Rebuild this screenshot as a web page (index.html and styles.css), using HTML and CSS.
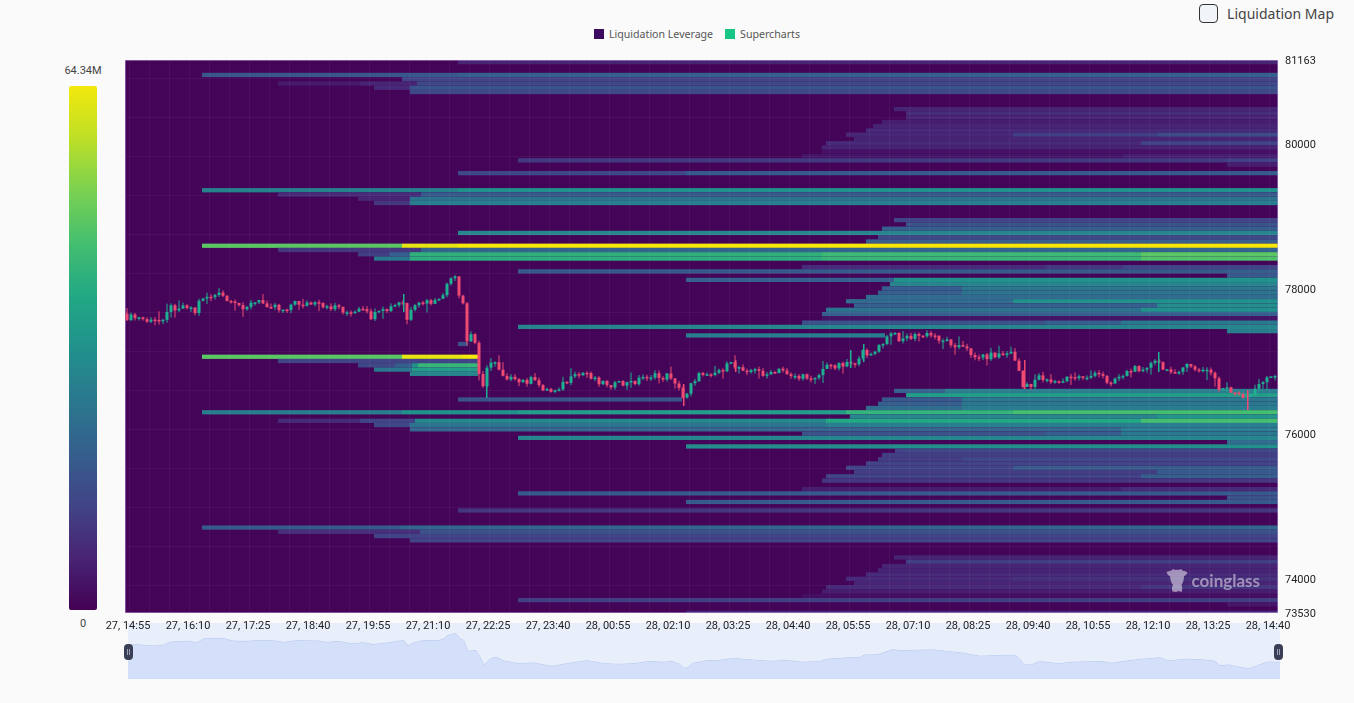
FILE: index.html
```html
<!DOCTYPE html>
<html lang="en">
<head>
  <meta charset="UTF-8">
  <meta name="viewport" content="width=device-width, initial-scale=1.0">
  <title>Liquidation Heatmap</title>
  <link rel="stylesheet" href="styles.css">
</head>
<body>

<div class="topbar">
  <label class="map-toggle">
    <input type="checkbox">
    <span>Liquidation Map</span>
  </label>
</div>

<div class="legend">
  <span class="legend-box leverage"></span>
  <span class="legend-text">Liquidation Leverage</span>
  <span class="legend-box supercharts"></span>
  <span class="legend-text">Supercharts</span>
</div>

<div class="chart-row">
  <div class="scale">
    <div class="scale-label">64.34M</div>
    <div class="scale-bar"></div>
    <div class="scale-label">0</div>
  </div>
  <div class="plot">
    <canvas id="heatmap" width="1153" height="553"></canvas>
    <div class="watermark">
      <svg viewBox="0 0 22 24" width="22" height="24">
        <path d="M.5 4C2 3 3.500 3 5 3C6 1 8 .5 9 2C10 1.500 12 1.500 13 2C14 .5 16 1 17 3C18.500 3 20 3 21.500 5C20 7 19 8 18 8C18 12 17 15 15.500 17C16.500 19 16.500 22 15.500 24L12.500 23L10 24L6.500 23.500C5.500 21 6 19 7 17C5 15 4.500 12 4 8C3 8 1.500 7 .5 4Z"/>
      </svg>
      <span>coinglass</span>
    </div>
  </div>
  <div class="y-axis" id="yAxis"></div>
</div>

<div class="brush">
  <canvas id="brushArea" width="1152" height="56"></canvas>
  <div class="x-axis" id="xAxis"></div>
  <div class="handle handle-left"></div>
  <div class="handle handle-right"></div>
</div>

<script src="chart.js"></script>
</body>
</html>
```

FILE: styles.css
```css
body {
  margin: 0;
  background-color: #fafafa;
  font-family: Roboto, Arial, sans-serif;
  color: #333;
}
.topbar {
  height: 27px;
  display: flex;
  justify-content: flex-end;
  align-items: center;
  padding-right: 20px;
}
.map-toggle {
  display: flex;
  align-items: center;
  gap: 9px;
  font-family: "Noto Sans", Arial, sans-serif;
  font-size: 14px;
  color: #444;
}
.map-toggle input {
  appearance: none;
  margin: 0;
  width: 19px;
  height: 19px;
  box-sizing: border-box;
  background-color: #f1f4f8;
  border: 1px solid #333;
  border-radius: 4px;
}
.legend {
  height: 14px;
  margin: 0 0 19px 40px;
  display: flex;
  justify-content: center;
  align-items: center;
  font-family: "Noto Sans", Arial, sans-serif;
  font-size: 10.6px;
  color: #555;
}
.legend-box {
  width: 10px;
  height: 10px;
  margin-right: 5px;
}
.legend-box.leverage {
  background-color: #3c0a5f;
}
.legend-box.supercharts {
  background-color: #16c784;
}
.legend-text {
  margin-right: 12px;
}
.legend-text:last-child {
  margin-right: 0;
}
.chart-row {
  display: flex;
  height: 553px;
}
.scale {
  width: 125px;
  flex-shrink: 0;
  box-sizing: border-box;
  padding: 4px 28px 0 69px;
  display: flex;
  flex-direction: column;
  align-items: center;
}
.scale-label {
  font-size: 11px;
  line-height: 14px;
  color: #444;
}
.scale-bar {
  width: 28px;
  height: 524px;
  flex-shrink: 0;
  margin: 8px 0 7px 0;
  border-radius: 2px;
  background: linear-gradient(to bottom, #f3e80c 0%, #bddf26 10%, #7ad151 20%, #44bf70 30%, #22a884 40%, #21918c 50%, #2a788e 60%, #355f8d 70%, #414487 80%, #482475 90%, #440154 100%);
}
.plot {
  position: relative;
  width: 1153px;
  height: 553px;
  flex-shrink: 0;
}
#heatmap {
  display: block;
  filter: blur(0.6px);
}
.watermark {
  position: absolute;
  right: 18px;
  bottom: 21px;
  display: flex;
  align-items: center;
  gap: 4px;
  color: rgba(255, 255, 255, 0.48);
  font-family: Lato, Arial, sans-serif;
  font-size: 17px;
  font-weight: 700;
}
.watermark svg {
  fill: rgba(255, 255, 255, 0.5);
}
.y-axis {
  position: relative;
  flex-grow: 1;
}
.y-label {
  position: absolute;
  left: 7px;
  font-size: 11px;
  line-height: 14px;
  margin-top: -6px;
  color: #222;
}
.brush {
  position: relative;
  width: 1152px;
  height: 56px;
  margin: 10px 0 0 128px;
  background-color: #e9eefb;
}
#brushArea {
  display: block;
}
.x-axis {
  position: absolute;
  left: -30px;
  top: -4px;
  display: flex;
}
.x-label {
  width: 60px;
  text-align: center;
  font-size: 11px;
  line-height: 14px;
  color: #222;
  white-space: nowrap;
}
.handle {
  position: absolute;
  top: 21px;
  width: 9px;
  height: 16px;
  border-radius: 4px;
  background-color: #3a3f55;
}
.handle::before {
  content: "";
  position: absolute;
  left: 3px;
  top: 5px;
  width: 1px;
  height: 6px;
  border-left: 1px solid #9aa0b5;
  border-right: 1px solid #9aa0b5;
}
.handle-left {
  left: -4px;
}
.handle-right {
  right: -3px;
}
```

FILE: chart.js
```js
const PLOT_LEFT = 125;
const PLOT_TOP = 60;
const ROW_HEIGHT = 4.27;
const PLOT_RIGHT = 1278;

const viridis = ['#440458', '#482475', '#414487', '#355f8d', '#2a788e', '#21918c', '#22a884', '#44bf70', '#7ad151', '#bddf26', '#f5e80a'];

// row number, then [start x, value] pairs; a value of 0 ends the band
const bands = [
  [0, [458, .1]],
  [3, [202, .27], [458, .3]],
  [4, [402, .2]],
  [5, [278, .07], [360, .1], [417, .22]],
  [6, [374, .12], [410, .26]],
  [7, [410, .22]],
  [11, [894, .1]],
  [12, [906, .13]],
  [13, [906, .1]],
  [14, [882, .08]],
  [15, [873, .1]],
  [16, [866, .12]],
  [17, [846, .11], [1013, .18], [1157, .23]],
  [18, [854, .1]],
  [19, [826, .12], [1141, .2]],
  [20, [822, .1]],
  [21, [822, .04]],
  [22, [802, .05], [1123, .08]],
  [23, [518, .17], [1227, .19]],
  [24, [1227, .08]],
  [26, [458, .22], [686, .28]],
  [30, [202, .44], [458, .5]],
  [31, [278, .12], [421, .28]],
  [32, [358, .1], [410, .38]],
  [33, [374, .16], [410, .42]],
  [37, [894, .2]],
  [38, [906, .25]],
  [39, [882, .3]],
  [40, [458, .45]],
  [41, [878, .22]],
  [42, [866, .3]],
  [43, [202, .74], [402, .97], [458, 1]],
  [44, [278, .16], [421, .32]],
  [45, [358, .18], [390, .3], [410, .64], [822, .68], [1141, .74]],
  [46, [374, .4], [410, .63], [822, .66], [1141, .72]],
  [48, [802, .12], [1045, .16], [1123, .2]],
  [49, [518, .28], [1227, .3]],
  [50, [1227, .28]],
  [51, [686, .3], [894, .5]],
  [52, [890, .45]],
  [53, [882, .3], [962, .4]],
  [54, [878, .3], [962, .38]],
  [55, [866, .35]],
  [56, [846, .35], [1013, .5]],
  [57, [854, .3], [1157, .48]],
  [58, [826, .38], [1141, .5]],
  [59, [822, .3]],
  [60, [822, .05]],
  [61, [802, .25], [1045, .3], [1121, .4]],
  [62, [518, .45]],
  [63, [1227, .42]],
  [64, [686, .42], [885, 0]],
  [66, [458, .25], [468, 0]],
  [69, [202, .74], [402, .97], [462, 1], [478, 0]],
  [70, [278, .2], [478, 0]],
  [71, [358, .22], [395, .3], [412, .5], [418, .66], [478, 0]],
  [72, [374, .4], [412, .55], [478, 0]],
  [73, [410, .45], [478, 0]],
  [77, [894, .3], [945, .42]],
  [78, [906, .55]],
  [79, [458, .25], [682, 0], [882, .28], [962, .4]],
  [80, [878, .3], [962, .4]],
  [81, [866, .35], [962, .42]],
  [82, [202, .42], [402, .5], [518, .55], [846, .65], [1013, .7]],
  [83, [850, .45], [1157, .52]],
  [84, [278, .12], [360, .2], [415, .46], [826, .6], [1141, .7]],
  [85, [374, .22], [410, .38], [826, .42]],
  [86, [410, .32], [1121, .42]],
  [87, [802, .25], [1045, .3], [1121, .4]],
  [88, [518, .46]],
  [89, [1227, .35]],
  [90, [686, .48], [894, .5]],
  [91, [895, .2], [906, .22]],
  [92, [882, .18]],
  [93, [878, .18], [962, .22]],
  [94, [866, .2]],
  [95, [846, .2], [1013, .28]],
  [96, [854, .18], [1157, .28]],
  [97, [826, .2], [1141, .3]],
  [98, [822, .16]],
  [100, [802, .08], [1121, .12]],
  [101, [518, .28]],
  [102, [1227, .25]],
  [103, [686, .28]],
  [105, [458, .16]],
  [109, [202, .28], [400, .33]],
  [110, [278, .13], [420, .25]],
  [111, [374, .2]],
  [112, [410, .2]],
  [116, [894, .1]],
  [117, [906, .18]],
  [118, [882, .1]],
  [119, [878, .1]],
  [120, [866, .12]],
  [121, [846, .12], [1013, .14]],
  [122, [854, .1]],
  [123, [826, .12], [1141, .16]],
  [124, [822, .08]],
  [125, [802, .03]],
  [126, [518, .18]],
  [127, [1227, .06]],
  [129, [686, .12]]
];

// price path read off the chart, [x, y] in page pixels
const pricePath = [
  [125, 317], [140, 318], [153, 322], [163, 320], [170, 308], [190, 305], [197, 312], [203, 297], [223, 295],
  [233, 305], [247, 306], [260, 302], [277, 305], [283, 310], [297, 303], [320, 305], [327, 310], [337, 305],
  [353, 315], [363, 310], [373, 317], [390, 310], [402, 303], [405, 304], [408, 322], [412, 313], [423, 303],
  [442, 302], [448, 285],
  [457, 278], [460, 297], [467, 307], [468, 343], [475, 332], [480, 360], [483, 393], [487, 375], [492, 363],
  [498, 360], [503, 373], [510, 377], [518, 383], [533, 380], [552, 392], [563, 385], [587, 372], [603, 382],
  [617, 385], [633, 383], [650, 375], [663, 378], [672, 375], [680, 385], [683, 400], [688, 395], [692, 382],
  [707, 372], [717, 372], [733, 365], [753, 370], [773, 375], [783, 370], [802, 378], [822, 375], [825, 368],
  [850, 362], [862, 362], [863, 353], [877, 352], [888, 340], [893, 333], [900, 338], [932, 335], [960, 345],
  [980, 357], [995, 355], [1015, 353], [1023, 377], [1023, 387], [1033, 387], [1038, 375], [1060, 383],
  [1070, 378], [1103, 375], [1110, 382], [1127, 373], [1143, 367], [1160, 362], [1168, 373], [1187, 367],
  [1203, 370], [1215, 373], [1220, 390], [1228, 387], [1247, 400], [1252, 397], [1267, 377], [1278, 378]
];

// wicks that stick out of the path: x, top y, bottom y
const longWicks = [
  [403, 294, 312, '#1fb092'], [850, 350, 368, '#1fb092'], [863, 344, 362, '#1fb092'],
  [683, 384, 406, '#ee4a72'], [1024, 360, 389, '#ee4a72'], [1158, 352, 372, '#1fb092'],
  [1247, 390, 410, '#ee4a72'], [486, 370, 398, '#1fb092'], [735, 360, 372, '#ee4a72']
];

const priceTicks = [81163, 80000, 78000, 76000, 74000, 73530];
const timeTicks = ['27, 14:55', '27, 16:10', '27, 17:25', '27, 18:40', '27, 19:55', '27, 21:10', '27, 22:25', '27, 23:40', '28, 00:55', '28, 02:10', '28, 03:25', '28, 04:40', '28, 05:55', '28, 07:10', '28, 08:25', '28, 09:40', '28, 10:55', '28, 12:10', '28, 13:25', '28, 14:40'];

function hexToRgb(hex) {
  return [1, 3, 5].map(i => parseInt(hex.slice(i, i + 2), 16));
}

function colorFor(value) {
  const pos = value * (viridis.length - 1);
  const i = Math.min(Math.floor(pos), viridis.length - 2);
  const a = hexToRgb(viridis[i]);
  const b = hexToRgb(viridis[i + 1]);
  const t = pos - i;
  return `rgb(${a.map((c, k) => Math.round(c + (b[k] - c) * t)).join(',')})`;
}

function priceAt(x) {
  for (let i = 1; i < pricePath.length; i++) {
    if (x <= pricePath[i][0]) {
      const [x0, y0] = pricePath[i - 1];
      const [x1, y1] = pricePath[i];
      return x1 === x0 ? y1 : y0 + (y1 - y0) * (x - x0) / (x1 - x0);
    }
  }
  return pricePath[pricePath.length - 1][1];
}

function noise(i) {
  const s = Math.sin(i * 12.9898) * 43758.5453;
  return s - Math.floor(s);
}

function drawBands(ctx) {
  ctx.fillStyle = viridis[0];
  ctx.fillRect(0, 0, 1153, 553);

  bands.forEach(band => {
    const y = band[0] * ROW_HEIGHT;
    const stops = band.slice(1);
    stops.forEach((stop, i) => {
      if (stop[1] === 0) return;
      const end = i + 1 < stops.length ? stops[i + 1][0] : PLOT_RIGHT;
      ctx.fillStyle = colorFor(stop[1]);
      ctx.fillRect(stop[0] - PLOT_LEFT, y, end - stop[0], ROW_HEIGHT);
    });
  });
}

function drawGrid(ctx) {
  ctx.fillStyle = 'rgba(255, 255, 255, 0.045)';
  for (let x = 4; x < 1153; x += 20) {
    ctx.fillRect(x, 0, 1, 553);
  }
  for (let y = 18; y < 553; y += 39) {
    ctx.fillRect(0, y, 1153, 1);
  }
  ctx.fillStyle = 'rgba(190, 160, 225, 0.5)';
  ctx.fillRect(0, 0, 1153, 1);
  ctx.fillRect(0, 0, 1, 553);
  ctx.fillRect(1152, 0, 1, 553);
  ctx.fillRect(0, 552, 1153, 1);
}

function drawCandles(ctx) {
  for (let i = 0; i < 288; i++) {
    const x = i * 4;
    const open = priceAt(PLOT_LEFT + x) - PLOT_TOP + (noise(i) - .5) * 7;
    const close = priceAt(PLOT_LEFT + x + 4) - PLOT_TOP + (noise(i + 1) - .5) * 7;
    const top = Math.min(open, close);
    const height = Math.max(Math.abs(open - close), 1.5);
    const color = close < open ? '#1fb092' : '#ee4a72';
    const wickUp = noise(i + 500) * (noise(i + 700) > .8 ? 9 : 3);
    const wickDown = noise(i + 900) * (noise(i + 1100) > .8 ? 9 : 3);

    ctx.fillStyle = color;
    ctx.fillRect(x + 1.5, top - wickUp, 1, height + wickUp + wickDown);
    ctx.fillRect(x + .5, top, 3, height);
  }

  longWicks.forEach(([x, top, bottom, color]) => {
    ctx.fillStyle = color;
    ctx.fillRect(x - PLOT_LEFT, top - PLOT_TOP, 1.5, bottom - top);
  });
}

function drawBrush(ctx) {
  const toY = x => 22 + (priceAt(x + 128) - 318) * .29;

  ctx.beginPath();
  ctx.moveTo(0, toY(0));
  for (let x = 0; x <= 1152; x += 4) {
    ctx.lineTo(x, toY(x));
  }
  ctx.strokeStyle = '#b3c6ee';
  ctx.stroke();
  ctx.lineTo(1152, 56);
  ctx.lineTo(0, 56);
  ctx.closePath();
  ctx.fillStyle = '#d4e0f9';
  ctx.fill();
}

function addAxes() {
  const yAxis = document.getElementById('yAxis');
  priceTicks.forEach(price => {
    const label = document.createElement('div');
    label.className = 'y-label';
    label.textContent = price;
    label.style.top = `${(81163 - price) * 553 / 7633}px`;
    yAxis.appendChild(label);
  });

  const xAxis = document.getElementById('xAxis');
  timeTicks.forEach(time => {
    const label = document.createElement('div');
    label.className = 'x-label';
    label.textContent = time;
    xAxis.appendChild(label);
  });
}

const heatCtx = document.getElementById('heatmap').getContext('2d');
drawBands(heatCtx);
drawGrid(heatCtx);
drawCandles(heatCtx);
drawBrush(document.getElementById('brushArea').getContext('2d'));
addAxes();
```
